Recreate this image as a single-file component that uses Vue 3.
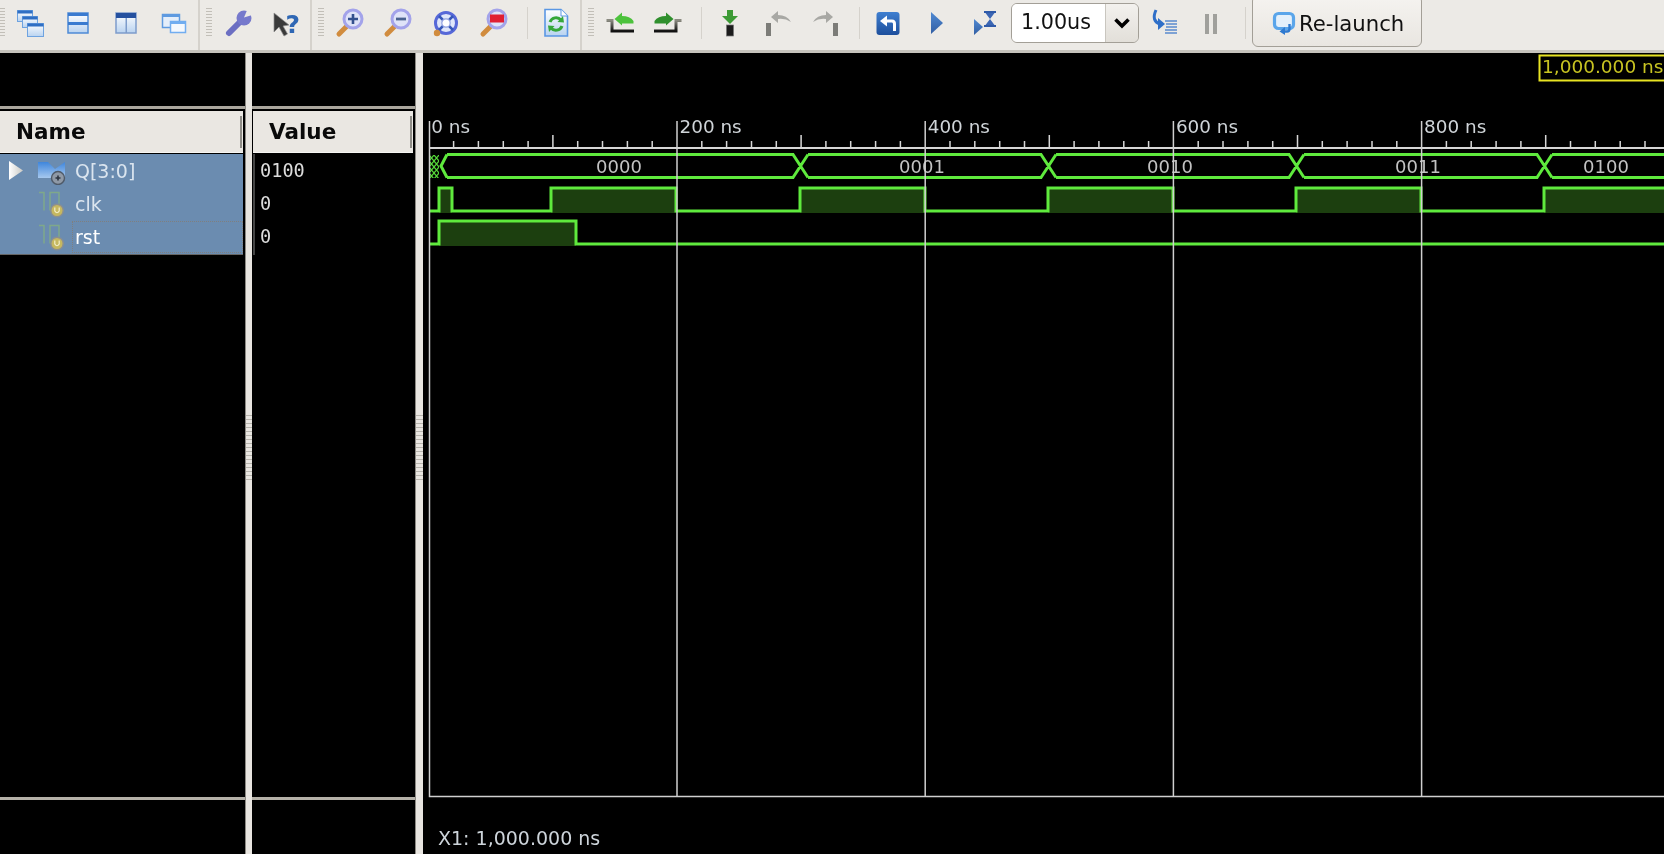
<template>
  <div class="window">
    <svg class="defs" width="0" height="0">
      <defs>
        <linearGradient id="paneFill" x1="0" y1="0" x2="0" y2="1">
          <stop offset="0" stop-color="#ffffff" />
          <stop offset="1" stop-color="#b9d3f0" />
        </linearGradient>
        <linearGradient id="blueFill" x1="0" y1="0" x2="0" y2="1">
          <stop offset="0" stop-color="#3f7fd0" />
          <stop offset="1" stop-color="#1d4f9c" />
        </linearGradient>
        <linearGradient id="trayLine" x1="0" y1="0" x2="0" y2="1">
          <stop offset="0" stop-color="#8a8a80" />
          <stop offset="1" stop-color="#111111" />
        </linearGradient>
        <linearGradient id="busFill" x1="0" y1="0" x2="0" y2="1">
          <stop offset="0" stop-color="#3f86dc" />
          <stop offset="1" stop-color="#a6c8ee" />
        </linearGradient>
        <linearGradient id="arrowTip" x1="0" y1="0" x2="1" y2="0">
          <stop offset="0" stop-color="#ffffff" />
          <stop offset="1" stop-color="#c9c9c4" />
        </linearGradient>
      </defs>
    </svg>

    <div class="toolbar">
      <span class="grip first"></span>
      <div class="slot">
        <svg viewBox="0 0 30 30">
          <rect x="2.5" y="2.5" width="15" height="11" fill="url(#paneFill)" stroke="#6ea3e0" />
          <rect x="2.5" y="2.5" width="15" height="3" fill="#2f6fc4" />
          <rect x="7.5" y="8.5" width="15" height="11" fill="url(#paneFill)" stroke="#6ea3e0" />
          <rect x="7.5" y="8.5" width="15" height="3" fill="#2f6fc4" />
          <rect x="12.5" y="15.5" width="16" height="13" fill="url(#paneFill)" stroke="#6ea3e0" />
          <rect x="12.5" y="15.5" width="16" height="3" fill="#2f6fc4" />
        </svg>
      </div>
      <div class="slot">
        <svg viewBox="0 0 30 30">
          <rect x="5" y="5" width="20" height="20" fill="url(#paneFill)" stroke="#4d8ad6" stroke-width="1.5" />
          <rect x="5" y="5" width="20" height="3" fill="#3a7bd0" />
          <rect x="5" y="14" width="20" height="3" fill="#3a7bd0" />
        </svg>
      </div>
      <div class="slot">
        <svg viewBox="0 0 30 30">
          <rect x="5" y="5" width="20" height="20" fill="url(#paneFill)" stroke="#7d9ccb" stroke-width="1.5" />
          <rect x="5" y="5" width="20" height="5" fill="#24509f" />
          <rect x="14.5" y="10" width="1.5" height="15" fill="#7d9ccb" />
        </svg>
      </div>
      <div class="slot">
        <svg viewBox="0 0 30 30">
          <rect x="3.5" y="6.5" width="17" height="13" fill="#e4eefa" stroke="#5e9ae0" stroke-width="1.5" />
          <rect x="3.5" y="6.5" width="17" height="2.5" fill="#5e9ae0" />
          <rect x="11.5" y="13.5" width="15" height="11" fill="#f4f8fd" stroke="#71adf0" stroke-width="1.5" />
          <rect x="11.5" y="13.5" width="15" height="2.5" fill="#71adf0" />
        </svg>
      </div>
      <span class="bar-end"></span>
      <span class="grip"></span>
      <div class="slot">
        <svg viewBox="0 0 30 30">
          <path d="M6 25 L18 13" stroke="#6c6fc2" stroke-width="6" stroke-linecap="round" />
          <circle cx="21" cy="10" r="7.5" fill="#7679cc" />
          <polygon points="21,9.5 25,0 32,6" fill="#eceae6" />
        </svg>
      </div>
      <div class="slot">
        <svg viewBox="0 0 30 30">
          <polygon points="3,5 3,24 8,19 13,28 16.5,26 12,18 18,17" fill="#3a3a3a" stroke="#8c8c8c" stroke-width="0.7" />
          <text x="14.5" y="25" class="help-mark">?</text>
        </svg>
      </div>
      <span class="bar-end"></span>
      <span class="grip"></span>
      <div class="slot">
        <svg viewBox="0 0 30 30">
          <path d="M4 26 L12 18" stroke="#d18c3e" stroke-width="5" stroke-linecap="round" />
          <circle cx="18" cy="11" r="9" fill="#dfe3f8" stroke="#a3a3ea" stroke-width="3" />
          <path d="M18 6 V16 M13 11 H23" stroke="#33508e" stroke-width="2.6" />
        </svg>
      </div>
      <div class="slot">
        <svg viewBox="0 0 30 30">
          <path d="M4 26 L12 18" stroke="#d18c3e" stroke-width="5" stroke-linecap="round" />
          <circle cx="18" cy="11" r="9" fill="#dfe3f8" stroke="#a3a3ea" stroke-width="3" />
          <path d="M13 11 H23" stroke="#4a628f" stroke-width="2.8" />
        </svg>
      </div>
      <div class="slot">
        <svg viewBox="0 0 30 30">
          <circle cx="15" cy="15" r="10.5" fill="#dfe6fa" stroke="#5668d8" stroke-width="3" />
          <path d="M8 8 L22 22 M22 8 L8 22" stroke="#3658b8" stroke-width="2.5" />
          <circle cx="15" cy="15" r="4.2" fill="#ffffff" stroke="#8fa0e0" stroke-width="1.2" />
          <circle cx="6" cy="25" r="3.2" fill="#d18c3e" />
        </svg>
      </div>
      <div class="slot">
        <svg viewBox="0 0 30 30">
          <path d="M4 26 L12 18" stroke="#d18c3e" stroke-width="5" stroke-linecap="round" />
          <circle cx="18" cy="11" r="9" fill="#dfe3f8" stroke="#a3a3ea" stroke-width="3" />
          <rect x="11" y="6.5" width="14" height="8" fill="#e01f33" />
        </svg>
      </div>
      <span class="thin"></span>
      <div class="slot">
        <svg viewBox="0 0 30 30">
          <path d="M4 1.5 H20 L26.5 8 V28 H4 Z" fill="url(#paneFill)" stroke="#5a97e4" stroke-width="1.6" />
          <path d="M20 1.5 V8 H26.5" fill="#ffffff" stroke="#5a97e4" />
          <path d="M9 14 A6.5 6.5 0 0 1 20 12" fill="none" stroke="#36a83a" stroke-width="3" />
          <polygon points="16.5,14 23,14.5 22,8" fill="#36a83a" />
          <path d="M21 18 A6.5 6.5 0 0 1 10 20" fill="none" stroke="#36a83a" stroke-width="3" />
          <polygon points="13.5,18 7,17.5 8,24" fill="#36a83a" />
        </svg>
      </div>
      <span class="bar-end"></span>
      <span class="grip"></span>
      <div class="slot">
        <svg viewBox="0 0 30 30">
          <path d="M1.5 12.5 H7 V23 H29" fill="none" stroke="url(#trayLine)" stroke-width="3" />
          <path d="M9.5 11 L17 4.5 V8 Q25 8 28.5 13 V15.5 H17 V17.5 Z" fill="#4cc23c" />
        </svg>
      </div>
      <div class="slot">
        <svg viewBox="0 0 30 30">
          <g transform="translate(30,0) scale(-1,1)">
            <path d="M1.5 12.5 H7 V23 H29" fill="none" stroke="url(#trayLine)" stroke-width="3" />
            <path d="M9.5 11 L17 4.5 V8 Q25 8 28.5 13 V15.5 H17 V17.5 Z" fill="#2f8f2d" />
          </g>
        </svg>
      </div>
      <span class="thin"></span>
      <div class="slot">
        <svg viewBox="0 0 30 30">
          <polygon points="12,2 18,2 18,8 23,8 15,16 7,8 12,8" fill="#3d9a35" />
          <rect x="11.5" y="17" width="7" height="11" fill="#1c1c1c" stroke="#777" stroke-width="0.7" />
        </svg>
      </div>
      <div class="slot">
        <svg viewBox="0 0 30 30">
          <rect x="3" y="15" width="5" height="13" fill="#7c7c78" />
          <path d="M8 9 L15 3 V7 Q24 7 28 14 Q22 10 15 11 V15 Z" fill="#a8a8a4" />
        </svg>
      </div>
      <div class="slot">
        <svg viewBox="0 0 30 30">
          <g transform="translate(30,0) scale(-1,1)">
            <rect x="3" y="15" width="5" height="13" fill="#7c7c78" />
            <path d="M8 9 L15 3 V7 Q24 7 28 14 Q22 10 15 11 V15 Z" fill="#a8a8a4" />
          </g>
        </svg>
      </div>
      <span class="thin"></span>
      <div class="slot">
        <svg viewBox="0 0 30 30">
          <rect x="3.5" y="4" width="23" height="23" rx="3" fill="url(#blueFill)" />
          <polygon points="7,13 14,7.5 14,18.5" fill="#ffffff" />
          <path d="M13 13 H19 Q21.5 13 21.5 16 V23" fill="none" stroke="#ffffff" stroke-width="3" />
        </svg>
      </div>
      <div class="slot">
        <svg viewBox="0 0 30 30">
          <polygon points="10,4 22,15 10,26" fill="url(#blueFill)" opacity="0.9" />
        </svg>
      </div>
      <div class="slot">
        <svg viewBox="0 0 30 30">
          <polygon points="5,11 14,19 5,27" fill="url(#blueFill)" opacity="0.9" />
          <rect x="15" y="3" width="12" height="2" fill="#2f5aa8" />
          <rect x="15" y="17" width="12" height="2" fill="#2f5aa8" />
          <polygon points="16.5,5 25.5,5 21,11 25.5,17 16.5,17 21,11" fill="#3b66b4" />
        </svg>
      </div>
      <div class="combo">
        <span class="combo-value">1.00us</span>
        <span class="combo-arrow">
          <svg viewBox="0 0 18 14" width="18" height="14">
            <path d="M2.5 3.5 L9 10 L15.5 3.5" fill="none" stroke="#000" stroke-width="3.6" />
          </svg>
        </span>
      </div>
      <div class="slot step-list">
        <svg viewBox="0 0 30 30">
          <path d="M6 2 Q1 13 10 16" fill="none" stroke="#2f6fc8" stroke-width="3" />
          <polygon points="8,10 15,16 8,22" fill="#2f6fc8" />
          <path d="M15 13 H27 M16 16 H27 M16 19 H27 M15 22 H27 M15 25 H27" stroke="#5a8ace" stroke-width="1.4" />
        </svg>
      </div>
      <div class="slot">
        <svg viewBox="0 0 30 30">
          <rect x="7" y="6" width="4" height="20" fill="#a0a09c" />
          <rect x="15" y="6" width="4" height="20" fill="#a0a09c" />
        </svg>
      </div>
      <span class="thin last"></span>
      <button class="relaunch" type="button">
        <svg viewBox="0 0 24 24" width="24" height="24">
          <rect x="2.5" y="2.5" width="19" height="15" rx="4" fill="#e4f0fb" stroke="#5aa5ea" stroke-width="3.2" />
          <path d="M17.5 13 V18 Q17.5 20.5 15 20.5 H12" fill="none" stroke="#2f7ad0" stroke-width="2.4" />
          <polygon points="13,16 7.5,20.5 13,24" fill="#2f7ad0" />
        </svg>
        <span>Re-launch</span>
      </button>
    </div>

    <div class="panes">
      <div class="pane name-pane">
        <div class="pane-top"></div>
        <div class="col-head"><span>Name</span><i class="head-grip"></i></div>
        <div class="rows">
          <div v-for="row in rows" :key="row.name" class="row" :class="{ focused: row.focus }">
            <span class="expander">
              <svg v-if="row.bus" viewBox="0 0 14 19" width="14" height="19">
                <polygon points="0,0 14,9.5 0,19" fill="url(#arrowTip)" />
              </svg>
            </span>
            <svg v-if="row.bus" class="sig-icon" viewBox="0 0 30 28" width="30" height="28">
              <path d="M1 5 H11 L18 12 L28 5 V21 H1 Z" fill="url(#busFill)" />
              <circle cx="21" cy="21" r="6.5" fill="#8f99a6" stroke="#4f5a68" stroke-width="1.4" />
              <path d="M18.5 21 H23.5 M21 18.5 V23.5" stroke="#2c3440" stroke-width="1.6" />
            </svg>
            <svg v-else class="sig-icon" viewBox="0 0 30 28" width="30" height="28">
              <path d="M2 2.5 H7 V20.5 M13 20.5 V2.5 H22 V14" fill="none" stroke="#7fa88a" stroke-width="1.5" />
              <circle cx="20" cy="20.5" r="6.2" fill="#c6b860" stroke="#8b8f90" stroke-width="1.4" />
              <path d="M17.8 17.5 V21 Q20 24.5 22.2 21 V17.5" fill="none" stroke="#f2eec8" stroke-width="1.2" />
            </svg>
            <span class="sig-name">{{ row.name }}</span>
          </div>
        </div>
        <div class="pane-fill"></div>
        <div class="pane-rule"></div>
        <div class="pane-bottom"></div>
      </div>
      <div class="splitter"><i></i></div>
      <div class="pane value-pane">
        <div class="pane-top"></div>
        <div class="col-head"><span>Value</span><i class="head-grip"></i></div>
        <div class="rows">
          <div v-for="row in rows" :key="row.name" class="row">{{ row.value }}</div>
        </div>
        <div class="pane-fill"></div>
        <div class="pane-rule"></div>
        <div class="pane-bottom"></div>
      </div>
      <div class="splitter wide"><i></i></div>

      <svg class="wave" viewBox="423 53 1241 801" width="1241" height="801">
        <defs>
          <pattern id="unknown" x="429" y="155" width="5" height="6" patternUnits="userSpaceOnUse">
            <path d="M0 0 L5 6 M5 0 L0 6" stroke="#55d838" stroke-width="1.2" />
          </pattern>
        </defs>

        <!-- cursor label -->
        <rect x="1539.5" y="55.5" width="140" height="25" fill="#000" stroke="#e8e322" stroke-width="2" />
        <text x="1542" y="73" class="marker">1,000.000 ns</text>

        <!-- ruler -->
        <path :d="ticksPath" stroke="#d6d6d6" stroke-width="1.5" fill="none" />
        <path d="M429 148 H1664" stroke="#d6d6d6" stroke-width="2" />
        <text v-for="t in rulerLabels" :key="t.text" :x="t.x" y="133" class="ruler">{{ t.text }}</text>

        <!-- Q bus -->
        <rect x="429" y="155" width="10" height="23" fill="url(#unknown)" />
        <path :d="busPath" class="sig" />
        <text v-for="b in busLabels" :key="b.text" :x="b.x" y="172.5" class="bus-label">{{ b.text }}</text>

        <!-- clk, rst -->
        <path v-for="(p, i) in fills" :key="i" :d="p" fill="#1c3f0f" />
        <path :d="clkPath" class="sig" />
        <path :d="rstPath" class="sig" />

        <!-- grid on top of the traces -->
        <path :d="gridPath" stroke="#cfcfcf" stroke-width="1.5" fill="none" />
        <text x="438" y="845" class="cursor-read">X1: 1,000.000 ns</text>
      </svg>
    </div>
  </div>
</template>

<script setup>
const rows = [
  { name: "Q[3:0]", value: "0100", bus: true },
  { name: "clk", value: "0" },
  { name: "rst", value: "0", focus: true }
]

// time axis: 200 ns = 248 px, starts at x = 429
const X0 = 428.8
const STEP = 248.2
const px = (ns) => X0 + (ns * STEP) / 200

const rulerLabels = [0, 200, 400, 600, 800].map((ns) => ({
  text: ns + " ns",
  x: px(ns) + 2.5
}))

let ticks = ""
for (let ns = 20; px(ns) < 1664; ns += 20) {
  if (ns % 200 === 0) continue
  ticks += `M${px(ns).toFixed(1)} ${ns % 100 === 0 ? 135 : 141} V148 `
}
const ticksPath = ticks

const gridPath =
  [200, 400, 600, 800].map((ns) => `M${px(ns).toFixed(1)} 121 V796`).join(" ") +
  " M429.5 121 V796.5 H1664"

// bus segments
const edges = [800, 1048, 1296, 1544]
const values = ["0000", "0001", "0010", "0011", "0100"]
const TOP = 154.5
const BOT = 177.5
const MID = 166
let bus = `M447 ${TOP} L441 ${MID} L447 ${BOT} `
let prev = 447
edges.forEach((x) => {
  bus += `M${prev} ${TOP} H${x - 7} L${x + 8} ${BOT} H${x + 8} M${prev} ${BOT} H${x - 7} L${x + 8} ${TOP} `
  prev = x + 8
})
bus += `M${prev} ${TOP} H1664 M${prev} ${BOT} H1664`
const busPath = bus

const busX = [619, 922, 1170, 1418, 1606]
const busLabels = values.map((text, i) => ({ text, x: busX[i] }))

// clk and rst as high pulses
const clkHigh = [[439, 452], [551, 676], [800, 925], [1048, 1173], [1296, 1421], [1544, 1670]]
const rstHigh = [[439, 576]]

function trace(pulses, hi, lo) {
  let d = `M429 ${lo}`
  pulses.forEach(([a, b]) => {
    d += ` H${a} V${hi} H${b} V${lo}`
  })
  return d + " H1670"
}

const clkPath = trace(clkHigh, 188, 211)
const rstPath = trace(rstHigh, 221, 244)
const fills = [
  ...clkHigh.map(([a, b]) => `M${a} 188 H${b} V213 H${a} Z`),
  ...rstHigh.map(([a, b]) => `M${a} 221 H${b} V246 H${a} Z`)
]
</script>

<style scoped>
.window {
  width: 1664px;
  height: 854px;
  display: flex;
  flex-direction: column;
  overflow: hidden;
  background: #000;
  font-family: "DejaVu Sans", sans-serif;
  filter: blur(0.4px);
}
.defs {
  position: absolute;
}

/* toolbar */
.toolbar {
  height: 50px;
  flex: none;
  display: flex;
  align-items: flex-start;
  background: #eceae6;
  border-bottom: 3px solid #c6c3bc;
  overflow: hidden;
}
.slot {
  width: 48px;
  height: 46px;
  flex: none;
  display: flex;
  align-items: center;
  justify-content: center;
}
.slot svg {
  width: 30px;
  height: 30px;
  display: block;
}
.grip {
  width: 6px;
  height: 30px;
  margin: 8px 2px 0 6px;
  flex: none;
  background: repeating-linear-gradient(to bottom, #c2bfb8 0 1px, transparent 1px 3px);
}
.grip.first {
  width: 5px;
  margin: 8px 1px 0 0;
}
.bar-end {
  width: 2px;
  height: 50px;
  flex: none;
  background: #d5d2cc;
}
.thin {
  width: 1px;
  height: 32px;
  margin: 7px 4px 0 9px;
  flex: none;
  background: #d5d2cc;
}
.thin.last {
  margin: 7px 6px 0 8px;
}
.help-mark {
  font-family: "DejaVu Sans", sans-serif;
  font-weight: 700;
  font-size: 25px;
  fill: #2f67b4;
}
.combo {
  width: 128px;
  height: 40px;
  margin: 3px 2px 0 3px;
  flex: none;
  box-sizing: border-box;
  display: flex;
  border: 1px solid #a39f97;
  border-radius: 6px;
  overflow: hidden;
}
.combo-value {
  width: 93px;
  box-sizing: border-box;
  padding-left: 9px;
  background: #fff;
  font-size: 20.7px;
  line-height: 37px;
  color: #111;
}
.combo-arrow {
  flex: 1;
  display: flex;
  align-items: center;
  justify-content: center;
  border-left: 1px solid #c9c6bf;
  background: linear-gradient(#f3f1ee, #e2dfd9);
}
.relaunch {
  width: 170px;
  height: 52px;
  margin: -5px 0 0 0;
  padding: 4px 0 0 19px;
  flex: none;
  box-sizing: border-box;
  display: flex;
  align-items: center;
  gap: 3px;
  border: 1px solid #a39f97;
  border-radius: 6px;
  background: linear-gradient(#f5f3f0, #e9e6e1);
  font-family: "DejaVu Sans", sans-serif;
  font-size: 21.2px;
  color: #111;
}

/* name and value panes */
.panes {
  flex: 1;
  display: flex;
  min-height: 0;
}
.pane {
  flex: none;
  display: flex;
  flex-direction: column;
  background: #000;
}
.name-pane {
  width: 245px;
}
.value-pane {
  width: 163px;
}
.pane-top {
  height: 53px;
  flex: none;
  border-bottom: 3px solid #aaa69d;
  margin-bottom: 2px;
}
.col-head {
  height: 42px;
  flex: none;
  box-sizing: border-box;
  display: flex;
  align-items: center;
  justify-content: space-between;
  margin-right: 2px;
  background: #eae7e2;
  border-bottom: 1px solid #f6f5f2;
  font-size: 21.5px;
  font-weight: 700;
  color: #0a0a0a;
}
.name-pane .col-head {
  padding-left: 16px;
}
.value-pane .col-head {
  margin-left: 1px;
  padding-left: 16px;
}
.head-grip {
  width: 2px;
  height: 32px;
  margin-right: 1px;
  background: #8e8c86;
}
.rows {
  height: 101px;
  margin-top: 1px;
  flex: none;
}
.name-pane .rows {
  margin-right: 2px;
  background: #6b8cb0;
  border-bottom: 1px solid #666;
  box-sizing: border-box;
}
.row {
  height: 33px;
  display: flex;
  align-items: center;
  box-sizing: border-box;
}
.expander {
  width: 38px;
  padding-left: 9px;
  box-sizing: border-box;
  display: flex;
  flex: none;
}
.sig-icon {
  flex: none;
  margin-left: -1px;
}
.sig-name {
  margin-left: 8px;
  font-size: 19px;
  color: #dbe5ef;
}
.focused .sig-name {
  color: #fff;
}
.focused {
  position: relative;
}
.focused::after {
  content: "";
  position: absolute;
  left: 72px;
  right: 0;
  top: 1px;
  bottom: 0;
  border: 1px dotted #7f7f7f;
}
.value-pane .rows {
  border-left: 2px solid #444;
  margin-left: 1px;
  padding-left: 5px;
}
.value-pane .row {
  font-family: "DejaVu Sans Mono", monospace;
  font-size: 18.6px;
  color: #dcdcdc;
}
.pane-fill {
  flex: 1;
}
.pane-rule {
  height: 3px;
  flex: none;
  background: #b5b1a8;
}
.pane-bottom {
  height: 54px;
  flex: none;
}
.splitter {
  width: 7px;
  flex: none;
  display: flex;
  align-items: center;
  background: #e8e5e0;
  border-left: 1px solid #8d8a84;
  box-sizing: border-box;
}
.splitter.wide {
  width: 8px;
}
.splitter i {
  width: 100%;
  height: 65px;
  margin-top: -13px;
  background: repeating-linear-gradient(to bottom, #b6b3ac 0 1px, transparent 1px 4px);
}

/* wave canvas */
.wave {
  flex: none;
  display: block;
  font-family: "DejaVu Sans", sans-serif;
}
.sig {
  fill: none;
  stroke: #5fea3d;
  stroke-width: 3;
}
.ruler {
  font-size: 18.4px;
  fill: #cfd4d8;
}
.bus-label {
  font-size: 18px;
  fill: #c2c2c2;
  text-anchor: middle;
}
.marker {
  font-size: 18.5px;
  fill: #c8c422;
}
.cursor-read {
  font-size: 19px;
  fill: #cdd4da;
}
</style>

<style>
html,
body {
  margin: 0;
  background: #000;
  overflow: hidden;
}
</style>
